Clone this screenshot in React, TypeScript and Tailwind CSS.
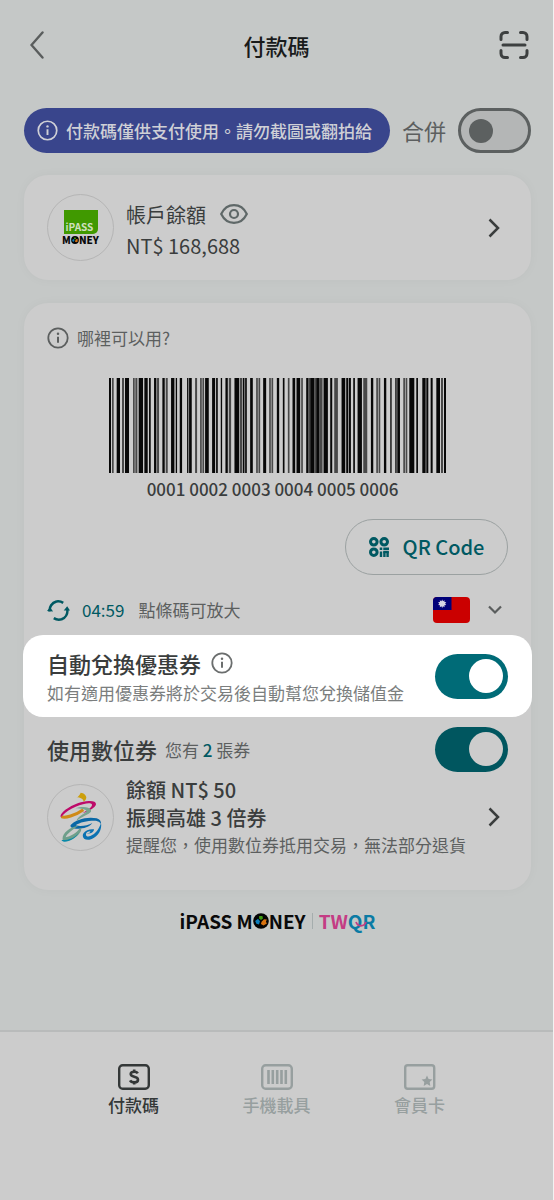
import React from 'react';

// [x, width, tone] for each bar, tone 1 is the lighter ink
const bars: [number, number, number?][] = [
  [0, 6], [9, 5, 1], [23, 10], [39, 6, 1], [48, 12], [72, 5, 1], [79, 6, 1], [89, 13], [106, 10], [120, 5],
  [135, 7], [144, 6, 1], [160, 7], [170, 6, 1], [186, 10], [200, 4], [212, 7], [234, 4], [240, 8], [258, 6, 1],
  [273, 5, 1], [280, 5, 1], [288, 11], [309, 9], [321, 5], [335, 4], [349, 7], [359, 7, 1], [376, 14], [392, 7, 1],
  [401, 5], [408, 5], [423, 8], [441, 5, 1], [448, 5, 1], [462, 9], [480, 5, 1], [487, 5, 1], [503, 7], [521, 5],
  [536, 5, 1], [550, 8], [562, 11], [576, 5, 1], [591, 6], [597, 6, 1], [603, 12], [615, 6, 1], [621, 10],
  [631, 9, 1], [643, 13], [663, 6], [675, 11, 1], [697, 11], [711, 6], [719, 6], [732, 5], [745, 13], [762, 12, 1],
  [785, 7], [801, 5, 1], [808, 5, 1], [824, 7], [843, 4], [858, 4], [864, 8], [882, 5, 1], [889, 5, 1], [900, 15],
  [921, 5], [939, 10], [951, 6], [964, 6], [981, 11], [996, 4], [1004, 6],
];

const InfoIcon: React.FC<{ className?: string }> = ({ className }) => (
  <svg viewBox="0 0 22 22" fill="none" className={className} aria-hidden="true">
    <circle cx="11" cy="11" r="9.7" stroke="currentColor" strokeWidth="1.8" />
    <path d="M11 9.8v6" stroke="currentColor" strokeWidth="2" />
    <circle cx="11" cy="6.7" r="1.25" fill="currentColor" />
  </svg>
);

const ChevronIcon = () => (
  <svg viewBox="0 0 12 20" fill="none" stroke="currentColor" strokeWidth="2.5" className="w-3 h-5">
    <path d="M1.5 1.5 10 10l-8.5 8.5" />
  </svg>
);

const MoneyDot: React.FC<{ className?: string }> = ({ className }) => (
  <svg viewBox="0 0 16 16" className={className} aria-hidden="true">
    <circle cx="8" cy="8" r="7.8" fill="#050505" />
    <path d="M6.2 3.1h3.2L10 5.6 8 7 6 5.4z" fill="#3f9b10" />
    <path d="M2.2 8 5 5.8l2 2.4L6 11.4l-2.6-.6z" fill="#0d7fbd" />
    <path d="M8.6 8.8 11 6.2l2.8.4-.9 2.1 1 1.7-3.4 2.1-2.6-1.6z" fill="#d9730f" />
  </svg>
);

const KaohsiungLogo = () => (
  <svg viewBox="88 64 126 150" fill="none" className="w-[42px] h-[50px]" aria-hidden="true">
    <path d="M137 80c6-1 10-7 13-14 10 1 17 8 17 14 0 5-3 10-8 13-1-8-10-13-22-13z" fill="#cc9f0c" />
    <path d="M92 138c12 5 40-3 66-21" stroke="#cf8a16" strokeWidth="9" />
    <path d="M90 139c-4-14 40-45 84-48 22-1 27 8 17 18-9 9-22 15-37 19 20-11 34-22 29-28-8-9-66 10-86 33-3 4-4 6-7 6z" fill="#bd0a69" />
    <path d="M134 113c20-7 42-5 47 5 4 12-24 16-43 33 0-15 31-23 29-30-2-5-14-7-33-8z" fill="#78a48f" />
    <path d="M120 163c12-15 50-27 78-20 10 3 14 10 13 18-1-6-9-11-20-11-22 0-45 5-56 14 14 5 36 1 50-7-8 12-32 19-49 17-11-1-19-5-16-11z" fill="#0a68a6" />
    <path d="M211 158c4 20-12 45-35 49-17 2-24-10-17-20 6-9 20-13 31-11 0 9-10 14-22 13 8-1 11-4 11-7-7 0-13 4-13 9-1 6 6 8 13 5 16-5 26-22 32-38z" fill="#0b72b2" />
    <path d="M96 207c-3-17 18-38 47-42-17 12-35 24-38 35 14-3 33-13 43-28 7 2 3 12-5 20-13 12-37 25-47 15z" fill="#6f9f8b" />
    <path d="M93 208c20 1 37-5 51-21-8 16-30 27-43 26-5-1-8-2-8-5z" fill="#0989a8" />
  </svg>
);

const TaiwanFlag = () => (
  <svg viewBox="0 0 37 26" className="w-[37px] h-[26px] rounded-[4px]" aria-hidden="true">
    <path fill="#cb0000" d="M0 0h37v26H0z" />
    <path fill="#000078" d="M0 0h18.500v13H0z" />
    <path
      fill="#d5d5e5"
      d="m9.200 2.500.8 1.700 1.600-1-.2 1.900 1.900.2-1.200 1.400 1.200 1.400-1.900.2.200 1.900-1.600-1-.8 1.700-.8-1.700-1.600 1 .2-1.900-1.900-.2 1.200-1.400-1.200-1.400 1.900-.2-.2-1.900 1.600 1z"
    />
  </svg>
);

const switchOn =
  'shrink-0 appearance-none w-[73px] h-[45px] rounded-full relative cursor-pointer before:absolute before:top-[5px] before:right-[5px] before:w-[34px] before:h-[34px] before:rounded-full';

const tabs = [
  {
    label: '付款碼',
    active: true,
    icon: (
      <>
        <rect x="1.200" y="1.200" width="29.600" height="23.600" rx="3.500" strokeWidth="2.400" />
        <path d="M19.800 9.300c-.6-1.100-1.800-1.600-3.600-1.600-2.300 0-3.500.9-3.500 2.400 0 3.700 7.300 1.700 7.300 5.600 0 1.600-1.300 2.600-3.700 2.600-2.100 0-3.500-.7-4.200-2M16.200 5.500v2.500M16.200 18v2.500" strokeWidth="2.600" />
      </>
    ),
  },
  {
    label: '手機載具',
    active: false,
    icon: (
      <>
        <rect x="1.200" y="1.200" width="29.600" height="23.600" rx="3.500" strokeWidth="2.400" />
        <path d="M7.500 6v14M11.800 6v14M16.200 6v14M20.500 6v14M24.800 6v14" strokeWidth="2.600" />
      </>
    ),
  },
  {
    label: '會員卡',
    active: false,
    icon: (
      <>
        <rect x="1.200" y="1.200" width="29" height="23.600" rx="2.500" strokeWidth="2.400" />
        <path d="m23 11.500 1.600 3.500 3.800.5-2.700 2.600.6 3.800-3.300-1.800-3.300 1.800.6-3.800-2.700-2.600 3.800-.5z" fill="currentColor" stroke="none" />
      </>
    ),
  },
];

const App: React.FC = () => {
  return (
    <div className="min-h-screen flex flex-col bg-[#c5c8c7] border-r border-[#f2f2f2] text-[#3a3d3d] font-['Noto_Sans_CJK_TC',sans-serif]">
      <header className="flex items-center justify-between px-6 pt-[23px]">
        <button aria-label="返回" className="w-[30px] h-11 flex items-center pl-1.5 text-[#5a5d5d]">
          <svg viewBox="0 0 14 28" fill="none" stroke="currentColor" strokeWidth="2.400" strokeLinecap="round" className="w-3.5 h-7">
            <path d="M12.500 1.500 1.500 14l11 12.500" />
          </svg>
        </button>
        <h1 className="text-[22px] leading-[44px] font-medium text-[#191b1b]">付款碼</h1>
        <button aria-label="掃描" className="w-[30px] h-11 flex items-center text-[#3d4040]">
          <svg viewBox="0 0 30 28" fill="none" stroke="currentColor" strokeWidth="3" strokeLinecap="round" className="w-[30px] h-7">
            <path d="M2 8.500V5.500a4 4 0 0 1 4-4h2.500M21.500 1.500H24a4 4 0 0 1 4 4v3M28 19.500v3a4 4 0 0 1-4 4h-2.500M8.500 26.500H6a4 4 0 0 1-4-4v-3M4 14h22" />
          </svg>
        </button>
      </header>

      <main className="flex-1 pl-6 pr-[22px] pt-[41px]">
        <div className="flex items-center gap-3">
          <p className="flex-1 min-w-0 h-[45px] pl-[13px] flex items-center gap-2 rounded-full bg-[#39458c] text-[#cfd0d6] text-[17px] font-medium whitespace-nowrap overflow-hidden">
            <InfoIcon className="w-[21px] h-[21px] shrink-0" />
            付款碼僅供支付使用。請勿截圖或翻拍給
          </p>
          <label htmlFor="merge" className="text-[22px] text-[#5c5f5f]">合併</label>
          <input
            id="merge"
            type="checkbox"
            role="switch"
            className="shrink-0 appearance-none w-[73px] h-[45px] rounded-full relative cursor-pointer border-3 border-[#5c6060] bg-[#b4b6b6] before:absolute before:top-2 before:left-2 before:w-6 before:h-6 before:rounded-full before:bg-[#5c6060]"
          />
        </div>

        <section className="mt-[22px] h-[105px] px-[23px] flex items-center rounded-[24px] bg-[#cccccc] shadow-[0_0_12px_rgba(0,0,0,0.03)]">
          <div className="w-[67px] h-[67px] shrink-0 rounded-full border border-[#b5b5b5] flex flex-col items-center justify-center">
            <div className="w-[34px] h-6 pl-0.5 flex items-end rounded-br-[5px] bg-[#409900] text-[#cfe0bd] text-[10px] leading-[14px] font-bold">iPASS</div>
            <div className="flex items-center text-[10px] leading-[12px] font-black text-[#0a0a0a]">
              M<MoneyDot className="w-2 h-2" />NEY
            </div>
          </div>
          <div className="flex-1 pl-3 pt-1 text-[20px] leading-[31px]">
            <div className="flex items-center gap-3.5">
              帳戶餘額
              <button aria-label="顯示餘額" className="text-[#5f6868]">
                <svg viewBox="0 0 28 20" fill="none" stroke="currentColor" strokeWidth="2.200" className="w-7 h-5">
                  <path d="M1.200 10C4 4.200 8.500 1.200 14 1.200S24 4.200 26.800 10C24 15.800 19.500 18.800 14 18.800S4 15.800 1.200 10z" />
                  <circle cx="14" cy="10" r="4" />
                </svg>
              </button>
            </div>
            <div>NT$ 168,688</div>
          </div>
          <button aria-label="帳戶明細" className="pr-2"><ChevronIcon /></button>
        </section>

        <section className="mt-[23px] pt-[23px] pb-8 rounded-[24px] bg-[#cccccc] shadow-[0_0_12px_rgba(0,0,0,0.03)]">
          <div className="px-[23px]">
            <a href="#where" className="flex items-center gap-2 text-[17px] leading-6 text-[#5c5f5f]">
              <InfoIcon className="w-[22px] h-[22px]" />
              哪裡可以用?
            </a>
            <button aria-label="放大條碼" className="mt-7 mx-auto block">
              <svg viewBox="0 0 1010 288" preserveAspectRatio="none" className="w-[337px] h-[95px]">
                {bars.map(([x, width, tone]) => (
                  <rect key={x} x={x} width={width} height="288" fill={tone ? '#484848' : '#080808'} />
                ))}
              </svg>
            </button>
            <p className="mt-1 pr-2.5 text-center text-[17px] leading-6 font-medium">0001 0002 0003 0004 0005 0006</p>
            <div className="mt-[18px] flex justify-end">
              <button className="w-[163px] h-14 rounded-full border border-[#9ba1a1] flex items-center justify-center gap-3.5 text-[20px] font-medium text-[#005962]">
                <svg viewBox="0 0 20 20" fill="none" stroke="currentColor" strokeWidth="3" className="w-5 h-5">
                  <circle cx="4.800" cy="4.800" r="3.300" />
                  <circle cx="15.200" cy="4.800" r="3.300" />
                  <circle cx="4.800" cy="15.200" r="3.300" />
                  <path d="M12 14.500V20M15.400 20v-5.500M18.600 20v-5.500M10.700 11.700h2.600M14.300 11.700H20" strokeWidth="2.400" />
                  <path d="M14.300 15H19.800" strokeWidth="2.400" />
                </svg>
                QR Code
              </button>
            </div>
            <div className="mt-5 h-[30px] flex items-center text-[17px]">
              <button aria-label="更新條碼" className="text-[#005962]">
                <svg viewBox="0 0 22 20" fill="none" stroke="currentColor" strokeWidth="2.400" className="w-[23px] h-[21px]">
                  <path d="M9 1.400A8.700 8.700 0 0 0 2.600 11M6.500 17.300a9 9 0 0 0 7.500 1.100 8.700 8.700 0 0 0 5.400-9.400M15.500 2.700a9 9 0 0 0-6.500-1.300" />
                  <path d="m0 10.500 3-3.500 2.800 4zM16 10l3.300-4 2.700 4z" fill="currentColor" stroke="none" />
                </svg>
              </button>
              <span className="ml-3 text-[#005962]">04:59</span>
              <span className="ml-3.5 text-[#5c5f5f]">點條碼可放大</span>
              <button aria-label="選擇地區" className="ml-auto pr-[6px] flex items-center gap-[18px] text-[#5a5d5d]">
                <TaiwanFlag />
                <svg viewBox="0 0 14 10" fill="none" stroke="currentColor" strokeWidth="2.200" className="w-3.5 h-2.5">
                  <path d="m1 1.500 6 6 6-6" />
                </svg>
              </button>
            </div>
          </div>

          {/* Spotlight row */}
          <div className="mt-2.5 -mx-px px-6 pt-[13px] pb-3 flex items-center justify-between rounded-[20px] bg-white">
            <div>
              <div className="flex items-center gap-2.5">
                <label htmlFor="auto-coupon" className="text-[22px] leading-[30px] font-medium">自動兌換優惠券</label>
                <button aria-label="說明" className="text-[#6b6e6e]"><InfoIcon className="w-[22px] h-[22px]" /></button>
              </div>
              <p className="mt-[3px] text-[17px] leading-6 text-[#7b7e7e]">如有適用優惠券將於交易後自動幫您兌換儲值金</p>
            </div>
            <input id="auto-coupon" type="checkbox" role="switch" defaultChecked className={`${switchOn} bg-[#006b77] before:bg-white`} />
          </div>

          <div className="px-[23px]">
            <div className="mt-2.5 flex items-center justify-between">
              <label htmlFor="digital-coupon" className="flex items-center gap-2 text-[17px] text-[#5c5f5f]">
                <span className="text-[22px] font-medium text-[#3a3d3d]">使用數位券</span>
                <span>您有 <span className="font-medium text-[#005962]">2</span> 張券</span>
              </label>
              <input id="digital-coupon" type="checkbox" role="switch" defaultChecked className={`${switchOn} bg-[#00565f] before:bg-[#cccccc]`} />
            </div>
            <div className="mt-1 flex items-center">
              <div className="w-[67px] h-[67px] shrink-0 rounded-full border border-[#b5b5b5] flex items-center justify-center">
                <KaohsiungLogo />
              </div>
              <div className="flex-1 pl-3 whitespace-nowrap">
                <p className="text-[20px] leading-7 font-medium">餘額 NT$ 50</p>
                <p className="text-[20px] leading-7 font-medium">振興高雄 3 倍券</p>
                <p className="text-[17px] leading-[26px] text-[#5c5f5f]">提醒您，使用數位券抵用交易，無法部分退貨</p>
              </div>
              <button aria-label="選擇數位券" className="pr-2"><ChevronIcon /></button>
            </div>
          </div>
        </section>

        <div className="mt-[17px] mb-8 flex items-center justify-center text-[19px] leading-7 font-bold text-[#0a0a0a]">
          iPASS
          <span className="ml-1 flex items-center">M<MoneyDot className="w-4 h-4" />NEY</span>
          <span className="mx-1.5 w-px h-4 bg-[#a5adad]" />
          <span className="relative font-bold text-[#c43c84]">
            TW<span className="text-[#0b7ba4]">QR</span>
            <svg viewBox="0 0 12 6" fill="none" className="absolute right-2 bottom-2 w-3 h-1.5">
              <path d="M1 1c2 5 8 5 10 0" stroke="#c43c84" strokeWidth="1.800" />
            </svg>
          </span>
        </div>
      </main>

      <nav className="h-[170px] px-[62px] pt-8 flex items-start bg-[#cccccc] border-t-2 border-[#b9bbbb]">
        {tabs.map(tab => (
          <button
            key={tab.label}
            className={`flex-1 flex flex-col items-center gap-[3px] text-[17px] leading-6 font-medium ${tab.active ? 'text-[#343838]' : 'text-[#979f9f]'}`}
          >
            <svg viewBox="0 0 32 26" fill="none" stroke="currentColor" className="w-8 h-[26px]">{tab.icon}</svg>
            {tab.label}
          </button>
        ))}
      </nav>
    </div>
  );
};

export default App;
